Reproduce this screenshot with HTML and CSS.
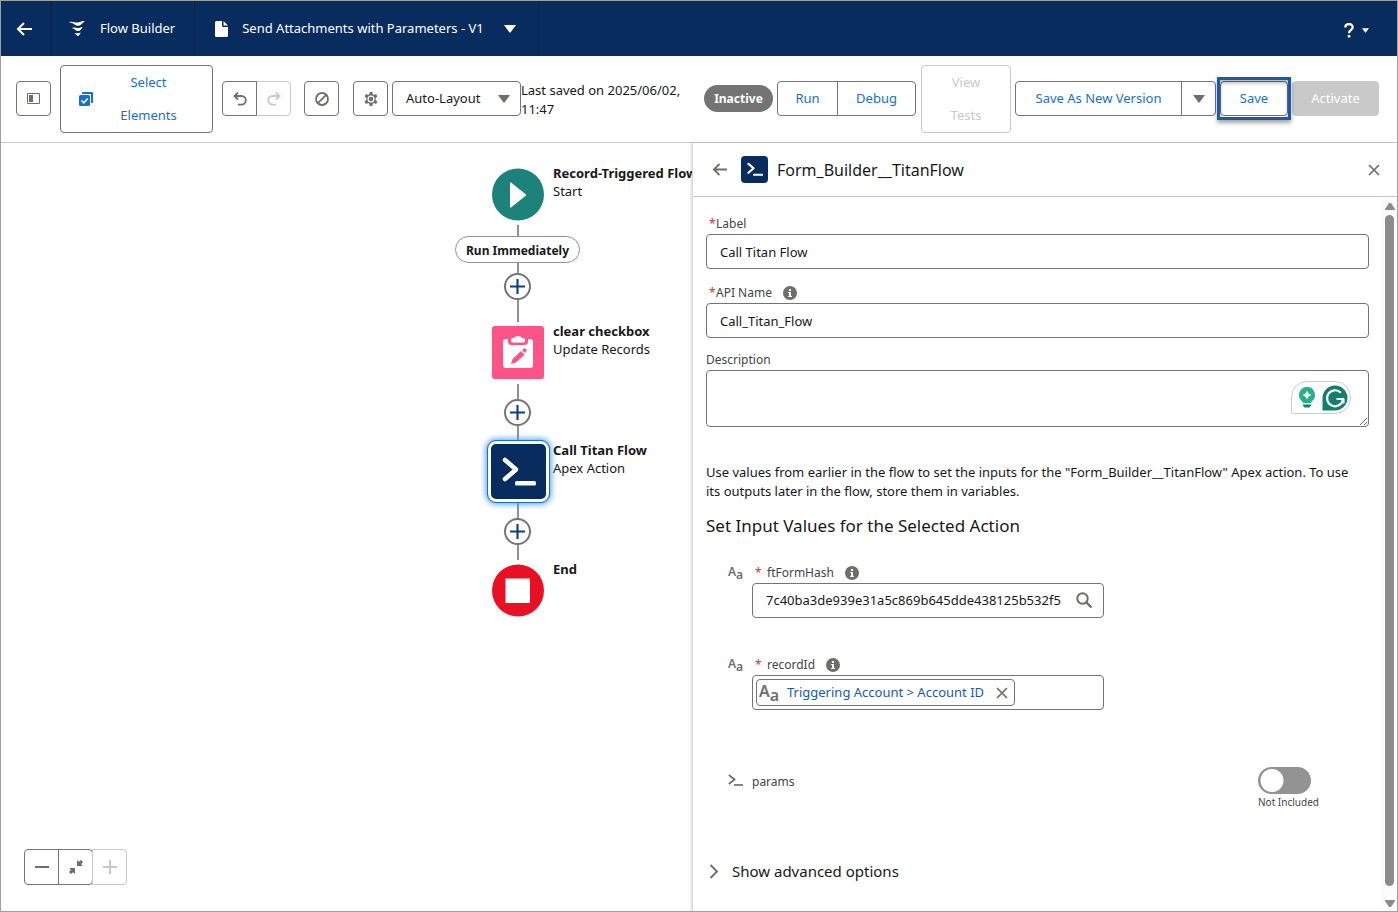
FILE: index.html
```html
<!DOCTYPE html>
<html lang="en">
<head>
<meta charset="utf-8">
<title>Flow Builder</title>
<link rel="stylesheet" href="styles.css">
</head>
<body>
<svg class="defs" aria-hidden="true">
  <symbol id="info" viewBox="0 0 14 14"><circle cx="7" cy="7" r="7" fill="#706e6b"/><path d="M6 3h2v2H6zM5 6h3v4h1v1H5v-1h1V7H5z" fill="#fff"/></symbol>
  <symbol id="prompt" viewBox="0 0 34 30"><path d="M3 3l11 9.500-11 9.500" fill="none" stroke="currentColor" stroke-width="4.500" stroke-linecap="round" stroke-linejoin="round"/><rect x="13" y="24" width="21" height="4.500" rx="1.500" fill="currentColor"/></symbol>
  <symbol id="plus" viewBox="0 0 14 14"><path d="M7 0v14M0 7h14" stroke="currentColor" stroke-width="2"/></symbol>
  <symbol id="cross" viewBox="0 0 12 12"><path d="M1 1l10 10M11 1L1 11" stroke="currentColor" stroke-width="1.700"/></symbol>
  <symbol id="down" viewBox="0 0 12 8"><path d="M0 0h12L6.500 7.500h-1z" fill="currentColor"/></symbol>
  <symbol id="left" viewBox="0 0 16 14"><path d="M8 1L2 7l6 6M2 7h14" fill="none" stroke="currentColor" stroke-width="2"/></symbol>
  <symbol id="undo" viewBox="0 0 14 14"><path d="M5 .5L1.500 4 5 7.500M2 4h6.500a4.300 4.300 0 0 1 0 8.600H5" fill="none" stroke="currentColor" stroke-width="1.800"/></symbol>
</svg>

<header class="header">
  <a class="header-cell back" href="#" aria-label="Back"><svg width="16" height="14"><use href="#left"/></svg></a>
  <div class="header-cell brand">
    <svg width="17" height="17" viewBox="0 0 17 17" fill="#fff"><path d="M0 2.200C3 .9 5.500 2.600 8 2.600 11 2.600 12 .8 16.500 1 14 1.600 12.800 5.600 9.300 5.700 6 5.800 6 3.400 0 2.200z"/><path d="M3 7.900c2.500-.9 4 .3 5.800.2 2-.1 2.700-1.100 5.400-.8-1.800.5-2.300 3.700-4.900 3.800C6.800 11.200 6.500 8.900 3 7.900z"/><path d="M5 13.100c1.600-.5 2.600.2 3.700.1 1.200-.1 1.800-.6 3.300-.4-1.200.4-1.400 3-3.100 3.100C7.300 16 7.500 13.800 5 13.100z"/></svg>
    <span>Flow Builder</span>
  </div>
  <button class="header-cell flow-name" type="button">
    <svg width="13" height="16" viewBox="0 0 13 16"><path d="M1.500 0H7v4.500Q7 6 8.500 6H13v8.500q0 1.500-1.500 1.500h-10Q0 16 0 14.500v-13Q0 0 1.500 0zM8.500 0L13 4.500H8.500z" fill="#fff"/></svg>
    <span>Send Attachments with Parameters - V1</span>
    <svg width="12" height="8"><use href="#down"/></svg>
  </button>
  <button class="help" type="button" aria-label="Help">
    <svg width="10" height="15" viewBox="0 0 10 15"><path d="M1.300 4.500C1.300 0 8.700 0 8.700 4.200 8.700 7 5 6.800 5 10.200" fill="none" stroke="#fff" stroke-width="2.300"/><path d="M3.800 12h2.500v2.500H3.800z" fill="#fff"/></svg>
    <svg width="7" height="5"><use href="#down"/></svg>
  </button>
</header>

<div class="toolbar">
  <button class="btn icon" type="button" aria-label="Toggle toolbox"><svg width="13" height="11" viewBox="0 0 13 11"><path d="M.5.5h12v10H.5z" fill="none" stroke="#706e6b"/><path d="M2 2h4v7H2z" fill="#706e6b"/></svg></button>
  <button class="btn tall select-elements" type="button">
    <svg width="14" height="14" viewBox="0 0 14 14"><path d="M4 0h9q1 0 1 1v9q0 1-1 1h-1V3q0-1-1-1H3V1q0-1 1-1z" fill="#176fd0"/><rect y="3" width="11" height="11" rx="1.500" fill="#176fd0"/><path d="M2.500 8.500l2.300 2.300L8.700 6.500" fill="none" stroke="#fff" stroke-width="1.500"/></svg>
    <span>Select Elements</span>
  </button>
  <div class="group undo-group">
    <button class="btn icon" type="button" aria-label="Undo"><svg width="14" height="14"><use href="#undo"/></svg></button>
    <button class="btn icon" type="button" aria-label="Redo" disabled><svg class="flip" width="14" height="14"><use href="#undo"/></svg></button>
  </div>
  <button class="btn icon block" type="button" aria-label="Disable"><svg width="14" height="14" viewBox="0 0 14 14" fill="none" stroke="#706e6b" stroke-width="1.800"><circle cx="7" cy="7" r="6"/><path d="M11.200 2.800l-8.400 8.400"/></svg></button>
  <button class="btn icon gear" type="button" aria-label="Settings"><svg width="14" height="14" viewBox="0 0 14 14"><path d="M5.700 0h2.600l.5 2.300 1 .6 2.300-.8 1.300 2.300L11.600 6v2l1.800 1.600-1.300 2.300-2.300-.8-1 .6-.5 2.300H5.700l-.5-2.300-1-.6-2.300.8L.6 9.600 2.400 8V6L.6 4.400l1.300-2.300 2.300.8 1-.6z" fill="#706e6b"/><circle cx="7" cy="7" r="2.900" fill="none" stroke="#fff" stroke-width="1.200"/></svg></button>
  <div class="layout-select">
    <select aria-label="Layout"><option>Auto-Layout</option></select>
    <svg width="12" height="8"><use href="#down"/></svg>
  </div>
  <p class="saved">Last saved on 2025/06/02, 11:47</p>
  <span class="status">Inactive</span>
  <div class="group">
    <button class="btn run" type="button">Run</button>
    <button class="btn debug" type="button">Debug</button>
  </div>
  <button class="btn tall view-tests" type="button" disabled>View Tests</button>
  <div class="group">
    <button class="btn save-as" type="button">Save As New Version</button>
    <button class="btn icon" type="button" aria-label="More save options"><svg width="12" height="8"><use href="#down"/></svg></button>
  </div>
  <button class="btn save" type="button">Save</button>
  <button class="btn activate" type="button" disabled>Activate</button>
</div>

<main class="main">
  <section class="canvas" aria-label="Flow canvas">
    <div class="flow">
      <i class="line line-start"></i><i class="line line-update"></i><i class="line line-end"></i>
      <div class="node n-start">
        <svg width="52" height="53" viewBox="0 0 52 52"><circle cx="26" cy="26" r="26" fill="#1c827a"/><path d="M18 14.500q0-1 1-.5l15 12v1L19 39q-1 .5-1-.5z" fill="#fff"/></svg>
        <div class="caption"><strong>Record-Triggered Flow</strong><span>Start</span></div>
      </div>
      <div class="pill">Run Immediately</div>
      <button class="add a1" type="button" aria-label="Add element"><svg width="15" height="15"><use href="#plus"/></svg></button>
      <div class="node n-update">
        <svg width="52" height="53" viewBox="0 0 52 53"><rect width="52" height="53" rx="3" fill="#fe5388"/><path d="M14 13h2v2.500q0 3.500 3.500 3.500h13q3.500 0 3.500-3.500V13h2q3 0 3 3v23q0 3-3 3H14q-3 0-3-3V16q0-3 3-3z" fill="#fff"/><path d="M19 14q0-2 2-2h1q1-2 4-2t4 2h1q2 0 2 2v1q0 1.500-2 1.500H21q-2 0-2-1.500z" fill="#fff"/><path d="M19 38l1.500-5L29 25l3.500 3.500-8.500 8zM30 24l2-1.500q1-.7 2 .3t.3 2L33 27z" fill="#fe5388"/></svg>
        <div class="caption"><strong>clear checkbox</strong><span>Update Records</span></div>
      </div>
      <button class="add a2" type="button" aria-label="Add element"><svg width="15" height="15"><use href="#plus"/></svg></button>
      <div class="node n-apex">
        <span class="apex"><svg width="34" height="30"><use href="#prompt"/></svg></span>
        <div class="caption"><strong>Call Titan Flow</strong><span>Apex Action</span></div>
      </div>
      <button class="add a3" type="button" aria-label="Add element"><svg width="15" height="15"><use href="#plus"/></svg></button>
      <div class="node n-end">
        <svg width="52" height="53" viewBox="0 0 52 52"><circle cx="26" cy="26" r="26" fill="#ea1024"/><path d="M13.500 14h24.500v24.500H13.500z" fill="#fff"/></svg>
        <div class="caption"><strong>End</strong></div>
      </div>
    </div>
    <div class="group zoom">
      <button class="btn icon" type="button" aria-label="Zoom out"><svg width="14" height="14" viewBox="0 0 14 14"><path d="M0 7h14" stroke="#706e6b" stroke-width="2"/></svg></button>
      <button class="btn icon" type="button" aria-label="Zoom to fit"><svg width="14" height="14" viewBox="0 0 14 14"><path d="M8 0l1.800 1.800L12 0l2 2-1.900 2.200L14 6H8zM6 14l-1.800-1.800L2 14l-2-2 1.900-2.200L0 8h6z" fill="#706e6b"/></svg></button>
      <button class="btn icon" type="button" aria-label="Zoom in" disabled><svg width="14" height="14"><use href="#plus"/></svg></button>
    </div>
  </section>

  <aside class="panel">
    <div class="panel-head">
      <button class="plain" type="button" aria-label="Back"><svg width="15" height="13"><use href="#left"/></svg></button>
      <span class="panel-icon"><svg width="16" height="15"><use href="#prompt"/></svg></span>
      <h1>Form_Builder__TitanFlow</h1>
      <button class="plain close" type="button" aria-label="Close"><svg width="12" height="12"><use href="#cross"/></svg></button>
    </div>
    <div class="panel-body">
      <form class="form">
        <div class="label"><b>*</b><label for="f-label">Label</label></div>
        <input class="box" id="f-label" type="text" value="Call Titan Flow">
        <div class="label spaced"><b>*</b><label for="f-api">API Name</label><svg width="14" height="14"><use href="#info"/></svg></div>
        <input class="box" id="f-api" type="text" value="Call_Titan_Flow">
        <div class="label plain-label"><label for="f-desc">Description</label></div>
        <div class="desc">
          <textarea class="box" id="f-desc"></textarea>
          <span class="helper">
            <svg width="16" height="21" viewBox="0 0 16 21"><path d="M8 0a8 8 0 0 1 5 14.200L12 16H4l-1-1.800A8 8 0 0 1 8 0z" fill="#27b08b"/><path d="M8 3.500q1 3.500 4.500 4.500Q9 9 8 12.500 7 9 3.500 8 7 7 8 3.500z" fill="#fff"/><path d="M4 17.500h8v1l-1.500 2h-5L4 18.500z" fill="#15806b"/></svg>
            <svg width="26" height="26" viewBox="0 0 26 26"><path d="M13 .5A12.500 12.500 0 1 1 13 25.500H.5V13A12.500 12.500 0 0 1 13 .5z" fill="#137e6b"/><path d="M18.800 7.700A8 8 0 1 0 21 14H14.500M21.500 14v4.500" fill="none" stroke="#fff" stroke-width="2.200"/></svg>
          </span>
        </div>
        <p class="intro">Use values from earlier in the flow to set the inputs for the "Form_Builder__TitanFlow" Apex action. To use its outputs later in the flow, store them in variables.</p>
        <h2>Set Input Values for the Selected Action</h2>

        <div class="param">
          <span class="aa" aria-hidden="true">A<small>a</small></span>
          <div class="field">
            <div class="label wide"><b>*</b><label for="f-hash">ftFormHash</label><svg width="14" height="14"><use href="#info"/></svg></div>
            <div class="combo">
              <input id="f-hash" type="text" value="7c40ba3de939e31a5c869b645dde438125b532f5">
              <svg width="17" height="17" viewBox="0 0 17 17" fill="none" stroke="#706e6b"><circle cx="6.500" cy="6.500" r="5.200" stroke-width="2"/><path d="M10.500 10.500l5 5" stroke-width="2.400"/></svg>
            </div>
          </div>
        </div>

        <div class="param second">
          <span class="aa" aria-hidden="true">A<small>a</small></span>
          <div class="field">
            <div class="label wide"><b>*</b><label for="f-record">recordId</label><svg width="14" height="14"><use href="#info"/></svg></div>
            <div class="combo has-token">
              <span class="token"><span class="aa big" aria-hidden="true">A<small>a</small></span><a href="#">Triggering Account &gt; Account ID</a><button class="plain" type="button" aria-label="Remove"><svg width="12" height="12"><use href="#cross"/></svg></button></span>
              <input id="f-record" type="text">
            </div>
          </div>
        </div>

        <div class="params">
          <svg width="15" height="13" viewBox="0 0 15 13"><path d="M.8 1L6.500 5.500.8 10" fill="none" stroke="#706e6b" stroke-width="1.700"/><path d="M6 11h9" stroke="#706e6b" stroke-width="1.700"/></svg>
          <label for="f-params">params</label>
          <div class="toggle">
            <input id="f-params" type="checkbox" role="switch">
            <span>Not Included</span>
          </div>
        </div>

        <button class="advanced" type="button"><svg width="10" height="15" viewBox="0 0 10 15"><path d="M1.500 1l6.500 6.500L1.500 14" fill="none" stroke="#706e6b" stroke-width="1.900"/></svg>Show advanced options</button>
      </form>
      <div class="scroll" aria-hidden="true">
        <svg width="10" height="8" viewBox="0 0 10 8"><path d="M4 1h2l4 6v1H0V7z" fill="#8b8b8b"/></svg>
        <i></i>
        <svg width="10" height="8" viewBox="0 0 10 8"><path d="M4 7h2l4-6V0H0v1z" fill="#8b8b8b"/></svg>
      </div>
    </div>
  </aside>
</main>
</body>
</html>
```

FILE: styles.css
```css
* { box-sizing: border-box; }
body {
  margin: 0;
  min-height: 100vh;
  display: flex;
  flex-direction: column;
  border: 1px solid #a0a0a0;
  background: #fff;
  color: #181818;
  font: 13px/19px "Noto Sans", "Open Sans", sans-serif;
  overflow: hidden;
}
svg { flex: none; display: block; }
.defs { position: absolute; width: 0; height: 0; }
button, input, textarea, select { font: inherit; color: inherit; margin: 0; }
button { background: none; border: 0; padding: 0; }
p, h1, h2 { margin: 0; font-weight: 400; }

/* Header */
.header { display: flex; height: 55px; background: #092c5e; color: #fff; }
.header-cell { display: flex; align-items: center; border-right: 1px solid #041b42; color: #fff; }
.back { padding: 0 19px 0 15px; }
.brand { gap: 14px; padding: 0 19px 0 17px; }
.flow-name { gap: 14px; padding: 0 22px 0 20px; }
.flow-name span { padding-right: 6px; }
.help { display: flex; align-items: center; gap: 8px; margin-left: auto; padding: 4px 28px 0 0; }

/* Toolbar */
.toolbar { display: flex; align-items: center; height: 87px; padding: 0 18px 1px 15px; border-bottom: 1px solid #c9c9c9; }
.btn {
  display: flex; align-items: center; justify-content: center; flex: none;
  height: 35px; border: 1px solid #747474; border-radius: 4px; background: #fff; color: #176fd0;
}
.btn.icon { width: 35px; color: #706e6b; }
.btn:disabled { border-color: #c9c9c9; color: #c9c9c9; }
.btn.tall { height: 68px; line-height: 33px; }
.select-elements { width: 153px; margin: 0 9px; padding: 0 18px; }
.select-elements span { flex: 1; padding: 0 12px 0 22px; }
.group { display: flex; flex: none; }
.group .btn + .btn { margin-left: -1px; border-radius: 0 4px 4px 0; }
.group .btn:first-child { border-radius: 4px 0 0 4px; position: relative; }
.flip { transform: scaleX(-1); }
.block { margin: 0 14px 0 13px; }
.layout-select { display: grid; align-items: center; flex: none; width: 129px; margin-left: 4px; }
.layout-select > * { grid-area: 1 / 1; }
.layout-select select { appearance: none; height: 35px; padding: 0 13px; border: 1px solid #747474; border-radius: 4px; background: #fff; }
.layout-select svg { justify-self: end; margin-right: 11px; color: #706e6b; pointer-events: none; }
.saved { flex: 1; padding: 2px 8px 0 0; }
.status { padding: 4px 0; width: 69px; border-radius: 14px; background: #747474; color: #fff; font-size: 12px; font-weight: 700; text-align: center; margin-right: 4px; }
.run { width: 61px; }
.debug { width: 79px; }
.view-tests { width: 90px; margin: 0 4px 0 5px; padding: 0 26px; }
.save-as { width: 167px; }
.save { position: relative; width: 68px; margin: 0 4px; }
.save::after { content: ""; position: absolute; inset: -5px -4px; border: 3px solid #1b5aab; box-shadow: 0 3px 4px rgba(0,0,0,.35), inset 0 3px 4px rgba(0,0,0,.3); }
.activate { width: 87px; background: #c9c9c9; }
.activate:disabled { color: #fff; }

/* Canvas */
.main { flex: 1; display: grid; grid-template-columns: minmax(0, 691fr) minmax(0, 705fr); }
.canvas { display: flex; flex-direction: column; justify-content: space-between; overflow: hidden; }
.flow { position: relative; height: 500px; margin-left: 454px; }
.line { position: absolute; left: 62px; width: 2px; background: #919191; }
.line-start { top: 82px; height: 97px; }
.line-update { top: 241px; height: 56px; }
.line-end { top: 359px; height: 58px; }
.node { position: absolute; left: 37px; display: flex; gap: 9px; white-space: nowrap; }
.n-start { top: 25px; }
.n-update { top: 183px; }
.n-apex { top: 298px; left: 33px; gap: 4px; }
.n-end { top: 421px; }
.caption { display: flex; flex-direction: column; line-height: 18px; margin-top: -4px; }
.n-apex .caption { margin-top: 0; }
.apex { display: grid; place-items: center; width: 61px; height: 61px; border: 3px solid #fff; border-radius: 8px; outline: 1px solid #176fd0; background: #092c5e; color: #fff; box-shadow: 0 0 6px 2px #4b9bf0; }
.pill { position: absolute; top: 93px; left: 0; width: 125px; height: 27px; border: 1px solid #919191; border-radius: 14px; background: #fff; font-size: 12px; font-weight: 700; line-height: 27px; text-align: center; white-space: nowrap; }
.add { position: absolute; left: 49px; display: grid; place-items: center; width: 27px; height: 27px; border: 2px solid #747474; border-radius: 50%; background: #fff; color: #0b3f86; }
.a1 { top: 130px; }
.a2 { top: 256px; }
.a3 { top: 375px; }
.zoom { margin: 0 0 26px 23px; }
.zoom .btn { height: 36px; }

/* Panel */
.panel { display: flex; flex-direction: column; border-left: 1px solid #d8d8d8; box-shadow: -1px 0 2px rgba(0,0,0,.15); background: #fff; min-width: 0; }
.plain { color: #706e6b; }
.panel-head { display: flex; align-items: center; height: 54px; padding: 0 17px 0 19px; border-bottom: 1px solid #c9c9c9; }
.panel-icon { display: grid; place-items: center; width: 27px; height: 27px; margin: 0 9px 0 14px; border-radius: 4px; background: #092c5e; color: #fff; }
h1 { font-size: 16px; line-height: 24px; }
.close { margin-left: auto; }
.panel-body { flex: 1; display: flex; }
.form { flex: 1; min-width: 0; padding: 16px 13px 0; }
.label { display: flex; align-items: center; height: 21px; padding-left: 3px; font-size: 12px; color: #444; }
.label b { width: 7px; color: #c23934; font-weight: 400; }
.label svg { margin-left: 11px; }
.spaced { margin-top: 13px; }
.plain-label { margin-top: 11px; padding: 0; }
.wide b { width: 12px; }
.box { display: block; width: 100%; height: 35px; padding: 0 13px; border: 1px solid #747474; border-radius: 4px; background: #fff; }
.desc { position: relative; }
textarea.box { height: 57px; padding: 8px 13px; }
.helper { position: absolute; right: 18px; bottom: 13px; display: flex; align-items: center; gap: 7px; width: 60px; height: 33px; padding-left: 7px; border: 1px solid #c5cedb; border-radius: 16px 16px 16px 2px; background: #fff; }
.intro { margin-top: 36px; padding-right: 12px; }
h2 { margin-top: 13px; font-size: 17px; line-height: 24px; }
.param { display: flex; gap: 9px; padding-left: 22px; margin-top: 24px; }
.second { margin-top: 36px; }
.aa { display: flex; width: 15px; height: 21px; color: #706e6b; font-size: 12px; font-weight: 600; line-height: 20px; }
.aa small { font-size: 12px; line-height: 25px; }
.field { width: 352px; }
.combo { display: flex; align-items: center; gap: 8px; height: 35px; padding: 0 10px 0 13px; border: 1px solid #747474; border-radius: 4px; }
.combo input { flex: 1; min-width: 0; padding: 0; border: 0; background: none; }
.has-token { padding: 0 3px; }
.token { display: flex; align-items: center; height: 27px; padding: 0 6px 0 2px; border: 1px solid #747474; border-radius: 4px; white-space: nowrap; }
.token a { margin: 0 12px 0 8px; color: #1b5aab; text-decoration: none; }
.big { width: 20px; height: 27px; font-size: 16px; line-height: 24px; }
.big small { font-size: 16px; line-height: 33px; }
.params { display: flex; align-items: flex-start; margin: 57px 47px 0 22px; font-size: 12px; color: #444; }
.params > svg { margin-top: 7px; }
.params label { margin: 5px 0 0 9px; }
.toggle { display: flex; flex-direction: column; min-width: 64px; margin-left: auto; font-size: 10px; line-height: 16px; }
.toggle input { appearance: none; width: 53px; height: 27px; border-radius: 14px; background: radial-gradient(circle at 14px 50%, #fff 11px, #939393 12px); }
.advanced { display: flex; align-items: center; gap: 13px; margin: 49px 0 0 3px; font-size: 15px; line-height: 24px; }
.scroll { display: flex; flex-direction: column; align-items: center; gap: 5px; width: 15px; padding: 5px 0 3px; background: #fcfcfc; }
.scroll i { flex: 1; width: 9px; border-radius: 5px; background: #8b8b8b; }
.scroll svg:last-child { margin-top: 9px; }
```
